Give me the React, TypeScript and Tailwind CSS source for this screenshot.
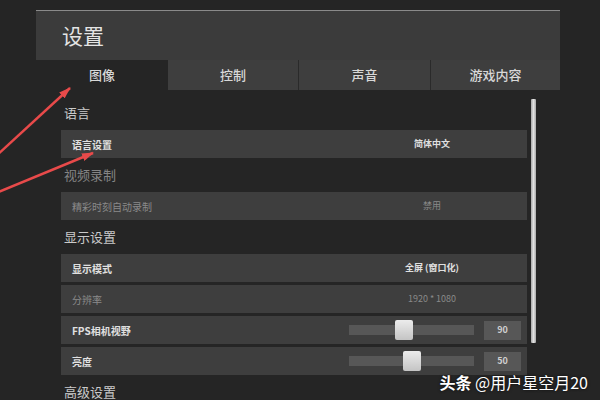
const rowBase = "flex h-[28px] w-full items-center bg-[#3e3e3e]";

function SectionTitle({ text, dim }: { text: string; dim?: boolean }) {
  return (
    <div
      className={`flex h-[34px] items-center pl-[3px] text-[13px] ${dim ? "text-[#858585]" : "text-[#cacaca]"}`}
    >
      {text}
    </div>
  );
}

function ValueRow({ label, value, dim }: { label: string; value: string; dim?: boolean }) {
  return (
    <div className={rowBase}>
      <span
        className={`flex-1 pl-[11px] text-[10px] ${dim ? "text-[#8a8a8a]" : "font-bold text-[#e0e0e0]"}`}
      >
        {label}
      </span>
      <span
        className={`w-[190px] text-center text-[9px] ${dim ? "text-[#8a8a8a]" : "font-bold text-[#e0e0e0]"}`}
      >
        {value}
      </span>
    </div>
  );
}

function SliderRow({ label, value, thumb }: { label: string; value: string; thumb: number }) {
  return (
    <div className={rowBase}>
      <span className="flex-1 pl-[11px] text-[10px] font-bold text-[#e0e0e0]">{label}</span>
      <div className="flex w-[190px] items-center pl-[12px]">
        {/* track */}
        <div className="relative h-[10px] w-[125px] bg-[#575757]">
          <div
            className="absolute top-[-5px] h-[20px] w-[18px] rounded-[2px] bg-gradient-to-b from-[#ececec] to-[#c4c4c4]"
            style={{ left: thumb }}
          />
        </div>
        <div className="ml-[10px] flex h-[19px] w-[37px] items-center justify-center bg-[#575757] text-[9px] font-bold text-[#cfcfcf]">
          {value}
        </div>
      </div>
    </div>
  );
}

export default function App() {
  return (
    <div className="relative h-[400px] w-[600px] overflow-hidden bg-[#252525] font-['Noto_Sans_CJK_SC',sans-serif]">
      <div className="ml-[36px] mt-[10px] w-[524px]">
        {/* header */}
        <div className="flex h-[50px] items-center border-t border-[#8a8a8a] bg-[#3b3b3b] pl-[26px] text-[21px] text-[#e4e4e4]">
          设置
        </div>

        {/* tabs */}
        <div className="flex h-[30px] text-[13px] font-medium text-[#d8d8d8]">
          <div className="flex w-[132px] items-center justify-center bg-[#252525]">图像</div>
          <div className="flex w-[130px] items-center justify-center bg-[#3e3e3e]">控制</div>
          <div className="flex w-[132px] items-center justify-center border-l border-[#2a2a2a] bg-[#3e3e3e]">
            声音
          </div>
          <div className="flex w-[130px] items-center justify-center border-l border-[#2a2a2a] bg-[#3e3e3e]">
            游戏内容
          </div>
        </div>

        {/* content */}
        <div className="flex items-start pl-[25px] pt-[6px]">
          <div className="flex w-[466px] flex-col">
            <SectionTitle text="语言" />
            <ValueRow label="语言设置" value="简体中文" />
            <SectionTitle text="视频录制" dim />
            <ValueRow label="精彩时刻自动录制" value="禁用" dim />
            <SectionTitle text="显示设置" />
            <div className="flex flex-col gap-[3px]">
              <ValueRow label="显示模式" value="全屏 (窗口化)" />
              <ValueRow label="分辨率" value="1920 * 1080" dim />
              <SliderRow label="FPS相机视野" value="90" thumb={46} />
              <SliderRow label="亮度" value="50" thumb={54} />
            </div>
            <SectionTitle text="高级设置" />
          </div>
          {/* scrollbar */}
          <div className="ml-[4px] mt-[3px] h-[244px] w-[5px] rounded-[1px] bg-gradient-to-r from-[#a8a8a8] via-[#e2e2e2] to-[#a8a8a8]" />
        </div>
      </div>

      {/* annotation arrows */}
      <svg className="pointer-events-none absolute inset-0" width="600" height="400">
        <defs>
          <marker id="ah" markerWidth="12" markerHeight="8" refX="11" refY="4" orient="auto" markerUnits="userSpaceOnUse">
            <path d="M0 0 L12 4 L0 8 Z" fill="#e84a4a" />
          </marker>
        </defs>
        <line x1="-4" y1="156" x2="70" y2="88" stroke="#e84a4a" strokeWidth="2.5" markerEnd="url(#ah)" />
        <line x1="-4" y1="193" x2="93" y2="153" stroke="#e84a4a" strokeWidth="2.5" markerEnd="url(#ah)" />
      </svg>

      {/* watermark */}
      <div className="absolute bottom-[10px] right-[12px] text-[16px] leading-none text-white [text-shadow:0_0_3px_rgba(0,0,0,0.8)]">
        <span className="font-bold">头条</span> @用户星空月20
      </div>
    </div>
  );
}
